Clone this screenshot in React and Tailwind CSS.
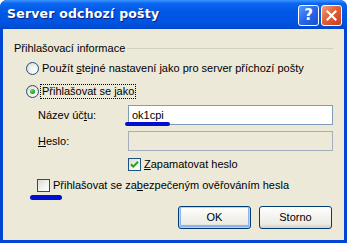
import React from 'react';

const font = { fontFamily: '"Liberation Sans", Arial, sans-serif' };

function Radio({ checked }) {
  return (
    <span className="relative w-[13px] h-[13px] rounded-full border border-[#1C5180] bg-[radial-gradient(circle_at_65%_65%,#ffffff_0%,#f2f2ee_40%,#d4d4cc_100%)] shrink-0 flex items-center justify-center">
      {checked && (
        <span className="w-[5px] h-[5px] rounded-full bg-[radial-gradient(circle_at_35%_35%,#6fe46f_0%,#21a121_60%,#1a7f1a_100%)]" />
      )}
    </span>
  );
}

function Check({ checked }) {
  return (
    <span className="w-[13px] h-[13px] border border-[#1C5180] bg-[linear-gradient(135deg,#dcdcd6_0%,#f4f4f0_60%,#ffffff_100%)] shrink-0 flex items-center justify-center">
      {checked && (
        <svg width="9" height="9" viewBox="0 0 9 9">
          <path d="M1 4.2 L3.3 6.6 L8 1.8" fill="none" stroke="#21A121" strokeWidth="2" />
        </svg>
      )}
    </span>
  );
}

function Button({ children, primary }) {
  return (
    <button
      className={`w-[73px] h-[23px] rounded-[3px] border border-[#003C74] bg-[linear-gradient(to_bottom,#ffffff_0%,#f5f4f0_40%,#ecebe5_80%,#d6d0c5_100%)] text-[11px] text-black flex items-center justify-center ${primary ? 'shadow-[inset_0_0_0_1px_#b8d2f8,inset_0_-1px_0_2px_#8fb2ee]' : ''}`}
      style={font}
    >
      {children}
    </button>
  );
}

export default function App() {
  return (
    <div className="w-[347px] h-[243px] flex flex-col rounded-t-[7px] bg-[#0046D5] overflow-hidden" style={font}>
      {/* Title bar */}
      <div className="h-[29px] shrink-0 flex items-center justify-between pl-[7px] pr-[5px] bg-[linear-gradient(to_bottom,#3d95ff_0%,#0a66f0_12%,#0058e6_40%,#0055e3_70%,#004fd8_90%,#0046c8_100%)]">
        <span className="text-white text-[13px] font-bold tracking-[0.2px] [text-shadow:1px_1px_0_#0a1e7e]" style={{ fontFamily: '"DejaVu Sans", "Liberation Sans", sans-serif', fontSize: '12.5px' }}>
          Server odchozí pošty
        </span>
        <div className="flex gap-[2px] mt-[1px]">
          <div className="w-[21px] h-[21px] rounded-[3px] border border-white bg-[linear-gradient(135deg,#5a9bff_0%,#2866ea_50%,#1a4fd0_100%)] flex items-center justify-center">
            <span className="text-white font-bold text-[15px] leading-none" style={{ fontFamily: '"DejaVu Sans", sans-serif' }}>?</span>
          </div>
          <div className="w-[21px] h-[21px] rounded-[3px] border border-white bg-[linear-gradient(135deg,#f0a080_0%,#e0603a_45%,#c8401e_100%)] flex items-center justify-center">
            <svg width="11" height="11" viewBox="0 0 11 11">
              <path d="M1.5 1.5 L9.5 9.5 M9.5 1.5 L1.5 9.5" stroke="#fff" strokeWidth="2.2" strokeLinecap="square" />
            </svg>
          </div>
        </div>
      </div>

      {/* Body */}
      <div className="relative flex-1 mx-[3px] mb-[3px] bg-[#ECE9D8] text-[11px] text-black flex flex-col">
        {/* group header */}
        <div className="mt-[12px] h-[14px] flex items-center pl-[11px] pr-[11px]">
          <span className="whitespace-nowrap">Přihlašovací informace</span>
          <span className="flex-1 ml-[2px] h-0 border-t border-[#D0D0BF]" />
        </div>

        <div className="mt-[6px] h-[14px] flex items-center pl-[23px] gap-[3px]">
          <Radio />
          <span className="whitespace-nowrap">Použít <u>s</u>tejné nastavení jako pro server příchozí pošty</span>
        </div>

        <div className="mt-[9px] h-[14px] flex items-center pl-[23px] gap-[2px]">
          <Radio checked />
          <span className="whitespace-nowrap outline-1 outline-dotted outline-black px-[1px] leading-[13px]">Přihlašovat se <u>j</u>ako</span>
        </div>

        <div className="mt-[7px] h-[20px] flex items-center pl-[35px]">
          <span className="w-[90px] whitespace-nowrap">Název úč<u>t</u>u:</span>
          <div className="w-[205px] h-[20px] border border-[#7F9DB9] bg-white flex items-center pl-[3px]">ok1cpi</div>
        </div>

        <div className="mt-[6px] h-[20px] flex items-center pl-[35px]">
          <span className="w-[90px] whitespace-nowrap"><u>H</u>eslo:</span>
          <div className="w-[205px] h-[20px] border border-[#A3AFBD] bg-[#ECE9D8]" />
        </div>

        <div className="mt-[6px] h-[14px] flex items-center pl-[125px] gap-[3px]">
          <Check checked />
          <span className="whitespace-nowrap"><u>Z</u>apamatovat heslo</span>
        </div>

        <div className="mt-[7px] h-[14px] flex items-center pl-[34px] gap-[3px]">
          <Check />
          <span className="whitespace-nowrap">Přihlašovat se za<u>b</u>ezpečeným ověřováním hesla</span>
        </div>

        <div className="mt-[14px] flex justify-end gap-[8px] pr-[12px]">
          <Button primary>OK</Button>
          <Button>Storno</Button>
        </div>

        {/* hand-drawn annotation marks */}
        <span className="absolute left-[122px] top-[93px] w-[45px] h-[4px] rounded-full bg-[#0010D0]" />
        <span className="absolute left-[27px] top-[166px] w-[32px] h-[5px] rounded-full bg-[#0010D0]" />
      </div>
    </div>
  );
}
